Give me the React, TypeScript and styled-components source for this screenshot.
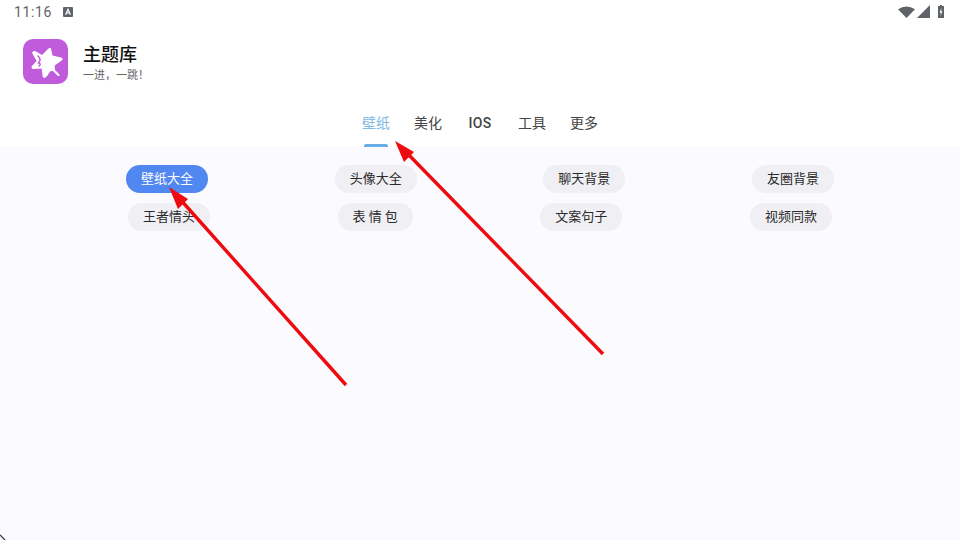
import React from "react";
import styled, { createGlobalStyle } from "styled-components";

const Global = createGlobalStyle`
  html, body { margin: 0; padding: 0; width: 960px; height: 540px; overflow: hidden; background: #fff; }
  #root { width: 960px; height: 540px; }
`;

const FONT = `Roboto, "Noto Sans CJK SC", "Noto Sans", sans-serif`;

const Page = styled.div`
  position: relative;
  width: 960px;
  height: 540px;
  display: flex;
  flex-direction: column;
  background: #fff;
  font-family: ${FONT};
  overflow: hidden;
`;

const StatusBar = styled.div`
  height: 24px;
  display: flex;
  align-items: center;
  padding: 0 16px 0 14px;
  flex: none;
`;

const Time = styled.span`
  font-size: 14px;
  letter-spacing: 0.6px;
  color: #5f6368;
  margin-right: 11px;
`;

const StatusIcons = styled.div`
  margin-left: auto;
  display: flex;
  align-items: center;
  gap: 2px;
  padding-bottom: 1px;
`;

const BatteryIcon = styled.svg`
  margin-left: 6px;
`;

const Header = styled.header`
  flex: none;
  height: 75px;
  display: flex;
  align-items: flex-start;
  gap: 15px;
  padding: 15px 0 0 23px;
  box-sizing: border-box;
`;

const AppIcon = styled.svg`
  display: block;
  flex: none;
`;

const Titles = styled.div`
  display: flex;
  flex-direction: column;
  padding-top: 5px;
`;

const Title = styled.div`
  font-size: 18px;
  line-height: 22px;
  font-weight: 500;
  color: #111;
`;

const Slogan = styled.div`
  font-size: 11px;
  line-height: 16px;
  margin-top: 2px;
  color: #666;
`;

const Tabs = styled.nav`
  flex: none;
  height: 48px;
  display: flex;
  justify-content: center;
`;

const Tab = styled.div<{ $active?: boolean }>`
  position: relative;
  width: 52px;
  text-align: center;
  font-size: 14px;
  line-height: 20px;
  padding-top: 14px;
  box-sizing: border-box;
  color: ${(p) => (p.$active ? "#7fb9e6" : "#444")};
`;

const LatinTab = styled(Tab)`
  font-weight: 500;
  letter-spacing: 0.3px;
`;

const Indicator = styled.span`
  position: absolute;
  left: 14px;
  bottom: 0;
  width: 24px;
  height: 3px;
  border-radius: 2px 2px 0 0;
  background: #68ade6;
`;

const Content = styled.main`
  flex: 1;
  background: #fbfaff;
  padding-top: 18px;
  display: flex;
  flex-direction: column;
  gap: 10px;
`;

const PillRow = styled.div<{ $inset: number }>`
  display: flex;
  justify-content: space-between;
  padding: 0 ${(p) => p.$inset}px;
`;

const Pill = styled.div<{ $active?: boolean; $narrow?: boolean }>`
  width: ${(p) => (p.$narrow ? 75 : 82)}px;
  height: 28px;
  border-radius: 14px;
  text-align: center;
  font-size: 13px;
  line-height: 28px;
  box-sizing: border-box;
  white-space: pre;
  background: ${(p) => (p.$active ? "#5087f0" : "#f0f0f4")};
  color: ${(p) => (p.$active ? "#fff" : "#2a2a2a")};
`;

const Overlay = styled.svg`
  position: absolute;
  left: 0;
  top: 0;
  pointer-events: none;
`;

const ArrowLine = styled.line`
  stroke: #ee0a0e;
  stroke-width: 3.4;
`;

const ArrowHead = styled.polygon`
  fill: #ee0a0e;
`;

const row1 = [
  { t: "壁纸大全", active: true },
  { t: "头像大全" },
  { t: "聊天背景" },
  { t: "友圈背景" },
];
const row2 = [
  { t: "王者情头" },
  { t: "表 情 包", narrow: true },
  { t: "文案句子" },
  { t: "视频同款" },
];

export default function App() {
  return (
    <Page>
      <Global />
      <StatusBar>
        <Time>11:16</Time>
        <svg width="10" height="10" viewBox="0 0 10 10">
          <rect x="0" y="0" width="10" height="10" rx="1" fill="#5f6368" />
          <path d="M2.6 7.8 L5 2.2 L7.4 7.8 M3.6 6 H6.4" stroke="#fff" strokeWidth="1.2" fill="none" />
        </svg>
        <StatusIcons>
          <svg width="17" height="12" viewBox="0 0 17 12">
            <path d="M0 3.2 Q8.5 -2 17 3.2 L8.5 12 Z" fill="#5f6368" />
          </svg>
          <svg width="13" height="13" viewBox="0 0 13 13">
            <path d="M13 0 V13 H0 Z" fill="#5f6368" />
          </svg>
          <BatteryIcon width="6" height="13" viewBox="0 0 6 13">
            <path d="M2 0 H4 V1 H6 V13 H0 V1 H2 Z" fill="#5f6368" />
            <path d="M3.4 3 L1.6 7.4 H2.8 L2.5 11 L4.4 6.2 H3.2 Z" fill="#fff" />
          </BatteryIcon>
        </StatusIcons>
      </StatusBar>
      <Header>
        <AppIcon width="45" height="45" viewBox="23 39 45 45">
          <rect x="23" y="39" width="45" height="45" rx="10" fill="#c05cdc" />
          <path
            d="M33 51.5 C34 50.8 35 51 36 51.6 L42 55 L48.5 48.6 C49.6 47.6 51 48 51.2 49.4 L52.5 55.6 L61 57.4 C62.8 57.8 63 59.4 61.8 60.4 L54.6 65.6 L55 70 L50 71.5 C48.5 74 47 76.5 45.5 77.6 C44 78.4 43 77.6 42.6 76 L41.6 68.6 L33.4 69 C31.6 69 31 67.4 32 66 L36.6 61 L32.4 53.6 C32 52.8 32.4 52 33 51.5 Z"
            fill="#fff"
          />
          <path d="M37.5 55.5 C40.5 58 41 60.5 38.5 63 C40.5 63.5 41 64.5 38.5 66.5" stroke="#c05cdc" strokeWidth="1.5" fill="none" />
          <path d="M51 67.5 L58.5 75" stroke="#fff" strokeWidth="2.2" strokeLinecap="round" />
        </AppIcon>
        <Titles>
          <Title>主题库</Title>
          <Slogan>一进，一跳！</Slogan>
        </Titles>
      </Header>
      <Tabs>
        <Tab $active>
          壁纸
          <Indicator />
        </Tab>
        <Tab>美化</Tab>
        <LatinTab>IOS</LatinTab>
        <Tab>工具</Tab>
        <Tab>更多</Tab>
      </Tabs>
      <Content>
        <PillRow $inset={126}>
          {row1.map((p) => (
            <Pill key={p.t} $active={p.active}>
              {p.t}
            </Pill>
          ))}
        </PillRow>
        <PillRow $inset={128}>
          {row2.map((p) => (
            <Pill key={p.t} $narrow={p.narrow}>
              {p.t}
            </Pill>
          ))}
        </PillRow>
      </Content>
      <Overlay width="960" height="540" viewBox="0 0 960 540">
        <ArrowLine x1="603" y1="354" x2="405" y2="151" />
        <ArrowHead points="395,141 414,152 404,162" />
        <ArrowLine x1="346" y1="385" x2="179" y2="198" />
        <ArrowHead points="169,187 188,199 178,209" />
        <path d="M0 535 L5 540" stroke="#333" strokeWidth="1.2" />
      </Overlay>
    </Page>
  );
}
